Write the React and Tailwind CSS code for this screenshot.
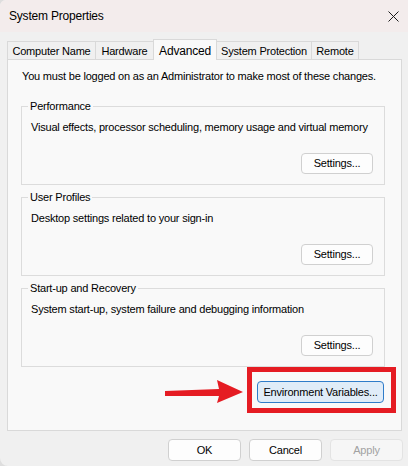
import React from 'react';

const Btn = ({ children, className = '' }) => (
  <button
    className={`h-[21px] rounded-[4px] border border-[#d0d0d0] bg-[#fdfdfd] text-[11px] leading-none text-black ${className}`}
  >
    {children}
  </button>
);

const Group = ({ title, desc }) => (
  <div className="relative flex h-[79px] w-[364px] flex-col border border-[#dcdcdc]">
    <span className="absolute -top-[8px] left-[6px] bg-[#f9f9f9] px-[2px] leading-[14px]">{title}</span>
    <p className="pl-[9px] pt-[12px] leading-[16px]">{desc}</p>
    <div className="mt-auto flex justify-end pr-[11px] pb-[10px]">
      <Btn className="w-[72px]">Settings...</Btn>
    </div>
  </div>
);

const tabs = [
  { label: 'Computer Name', w: 'w-[89px]' },
  { label: 'Hardware', w: 'w-[59px]' },
  { label: 'Advanced', w: 'w-[64px]', active: true },
  { label: 'System Protection', w: 'w-[96px]' },
  { label: 'Remote', w: 'w-[48px]' },
];

export default function App() {
  return (
    <div className="relative h-[466px] w-[408px] overflow-hidden bg-[#dedede] font-['Liberation_Sans',Arial,sans-serif] text-[11px] tracking-[-0.2px] text-black">
      <div className="flex h-full flex-col rounded-tl-[6px] rounded-bl-[8px] bg-[#f0f0f0]">
        {/* title bar */}
        <div className="flex h-[32px] shrink-0 items-center justify-between rounded-tl-[6px] bg-[#f3ecec] pl-[9px] pr-[8px]">
          <span className="text-[12px]">System Properties</span>
          <svg width="11" height="11" viewBox="0 0 11 11" className="mr-[1px]">
            <path d="M0.5 0.5 L10.5 10.5 M10.5 0.5 L0.5 10.5" stroke="#1c1c1c" strokeWidth="1" />
          </svg>
        </div>

        {/* tabs */}
        <div className="ml-[7px] flex h-[27px] items-end pt-[7px]">
          {tabs.map((t) =>
            t.active ? (
              <div
                key={t.label}
                className={`${t.w} relative z-10 -mb-px -ml-px flex h-[21px] items-start justify-center border border-b-0 border-[#d9d9d9] bg-[#f9f9f9] pt-[2px] text-[12px]`}
              >
                {t.label}
              </div>
            ) : (
              <div
                key={t.label}
                className={`${t.w} -ml-px flex h-[18px] items-center justify-center border border-b-0 border-[#d9d9d9] bg-[#f0f0f0] pt-[1px] first:ml-0`}
              >
                {t.label}
              </div>
            )
          )}
        </div>

        {/* panel */}
        <div className="ml-[7px] w-[395px] border border-[#d9d9d9] bg-[#f9f9f9] pl-[13px] pt-[8px] pb-[27px]">
          <p className="ml-[1px] leading-[16px]">
            You must be logged on as an Administrator to make most of these changes.
          </p>
          <div className="mt-[22px] flex flex-col gap-[12px]">
            <Group title="Performance" desc="Visual effects, processor scheduling, memory usage and virtual memory" />
            <Group title="User Profiles" desc="Desktop settings related to your sign-in" />
            <Group title="Start-up and Recovery" desc="System start-up, system failure and debugging information" />
          </div>
          <div className="mt-[14px] flex w-[364px] justify-end pr-[1px]">
            <button className="h-[22px] w-[127px] rounded-[4px] border border-[#2f7cc9] bg-[#e0ecf8] text-[11px] leading-none text-black">
              Environment Variables...
            </button>
          </div>
        </div>

        {/* dialog buttons */}
        <div className="mt-[8px] flex w-[403px] justify-end gap-[8px]">
          <Btn className="h-[22px] w-[73px]">OK</Btn>
          <Btn className="h-[22px] w-[73px]">Cancel</Btn>
          <button className="h-[22px] w-[73px] rounded-[4px] border border-[#e3e3e3] bg-[#f6f6f6] text-[11px] leading-none text-[#a2a2a2]">
            Apply
          </button>
        </div>
      </div>

      {/* annotation */}
      <div className="absolute left-[247px] top-[367px] h-[46px] w-[149px] border-[5px] border-[#e51c23]" />
      <svg className="absolute left-[160px] top-[375px]" width="90" height="32" viewBox="0 0 90 32">
        <polygon points="5,16 59,14 57,5 83,17 57,28 59,21 5,21" fill="#e51c23" />
      </svg>
    </div>
  );
}
